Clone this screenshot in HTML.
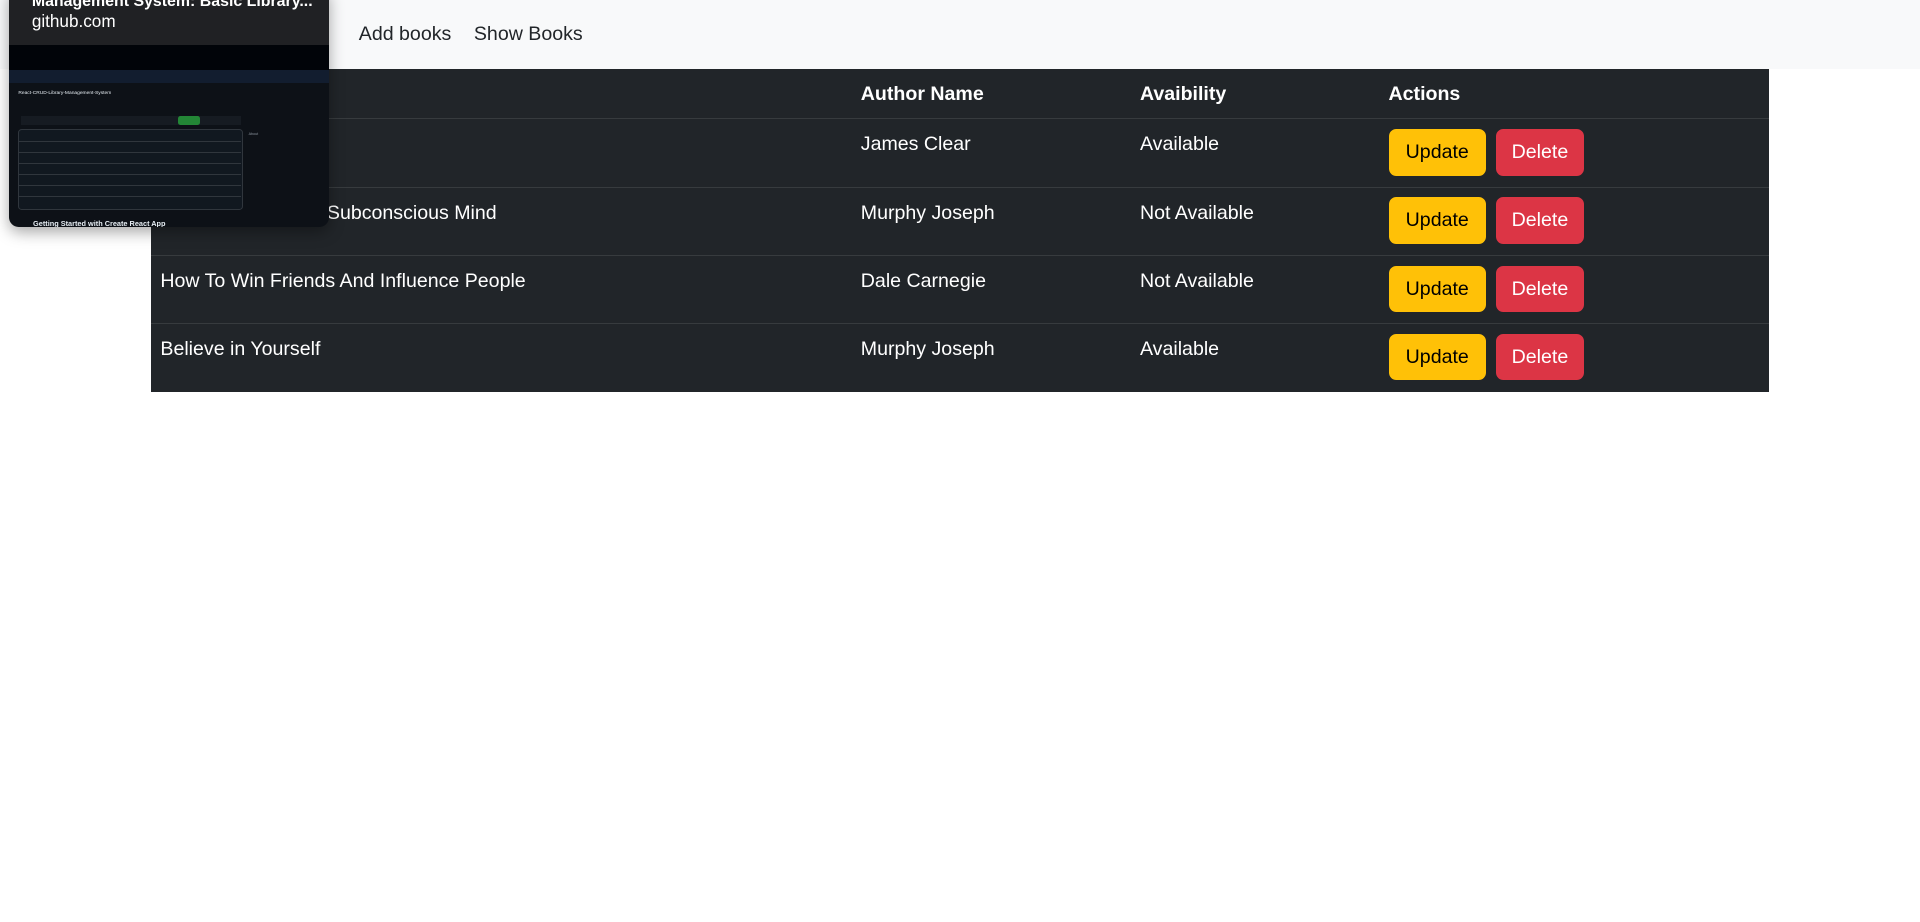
<!DOCTYPE html>
<html><head><meta charset="utf-8"><style>
html,body{margin:0;padding:0;background:#fff;overflow:hidden}
body{width:1920px;height:922px;position:relative;font-family:"Liberation Sans",sans-serif}
.w{zoom:1.2245;position:absolute;left:0;top:0;width:1568px;height:753px}
.nav{position:absolute;left:0;top:0;width:1568px;height:56px;background:#f8f9fa}
.nav a{position:absolute;top:19px;font-size:16px;color:#212529;text-decoration:none}
table{position:absolute;left:123px;top:56px;width:1322px;border-collapse:collapse;background:#212529;color:#fff;font-size:16px}
th{text-align:left;font-weight:bold;height:41px;padding:1px 8px 0;border-bottom:1px solid #373b3e;vertical-align:middle;box-sizing:border-box}
td{height:55.75px;padding:9px 8px 7px;box-sizing:border-box;vertical-align:top;border-bottom:1px solid #373b3e;line-height:24px}
tr:last-child td{border-bottom:none}
.b{display:inline-block;height:38px;line-height:38px;border-radius:6px;font-size:16px;padding:0 14px;vertical-align:top;margin-top:-1px}
.u{background:#ffc107;color:#000;margin-right:8px}
.d{background:#dc3545;color:#fff;padding:0 13px}
.pop{position:absolute;left:7px;top:-10px;width:262px;height:195px;background:#0d1117;border-radius:8px;box-shadow:0 4px 12px rgba(0,0,0,.35);overflow:hidden}
.pop .h{background:#202124;height:47px;color:#fff;padding:0 19px;position:relative}
.pop .t{position:absolute;top:4px;left:19px;font-weight:bold;font-size:13px;white-space:nowrap}
.pop .g{position:absolute;top:19px;left:19px;font-size:14px}
.r{position:absolute;left:8px;height:1px;background:#30363d;width:182px}
</style></head><body><div class="w">
<div class="nav"><a style="left:293px">Add books</a><a style="left:387px">Show Books</a></div>
<table>
<tr><th style="width:572px"></th><th style="width:228px">Author Name</th><th style="width:203px">Avaibility</th><th>Actions</th></tr>
<tr><td>Atomic Habits</td><td>James Clear</td><td>Available</td><td><span class="b u">Update</span><span class="b d">Delete</span></td></tr>
<tr><td>The Power of Your Subconscious Mind</td><td>Murphy Joseph</td><td>Not Available</td><td><span class="b u">Update</span><span class="b d">Delete</span></td></tr>
<tr><td>How To Win Friends And Influence People</td><td>Dale Carnegie</td><td>Not Available</td><td><span class="b u">Update</span><span class="b d">Delete</span></td></tr>
<tr><td>Believe in Yourself</td><td>Murphy Joseph</td><td>Available</td><td><span class="b u">Update</span><span class="b d">Delete</span></td></tr>
</table>
<div class="pop">
<div class="h"><div class="t">Management System: Basic Library...</div><div class="g">github.com</div></div>
<div style="position:absolute;top:47px;left:0;width:262px;height:20px;background:#010409"></div>
<div style="position:absolute;top:67px;left:0;width:262px;height:11px;background:#121d2f"></div>
<div style="position:absolute;top:84px;left:8px;font-size:4px;color:#e6edf3">React-CRUD-Library-Management-System</div>
<div style="position:absolute;top:105px;left:10px;width:180px;height:7px;background:#161b22"></div>
<div style="position:absolute;top:105px;left:138px;width:18px;height:7px;background:#238636;border-radius:2px"></div>
<div style="position:absolute;top:115px;left:8px;width:182px;height:65px;background:#111820;border:1px solid #30363d;border-radius:3px"></div>
<div style="position:absolute;top:118px;left:196px;width:60px;height:50px;font-size:3px;color:#8b949e">About</div>
<div class="r" style="top:125px"></div><div class="r" style="top:134px"></div><div class="r" style="top:143px"></div><div class="r" style="top:152px"></div><div class="r" style="top:161px"></div><div class="r" style="top:170px"></div>
<div style="position:absolute;top:189px;left:20px;font-size:6px;color:#e6edf3;font-weight:bold">Getting Started with Create React App</div>
</div>
</div></body></html>
